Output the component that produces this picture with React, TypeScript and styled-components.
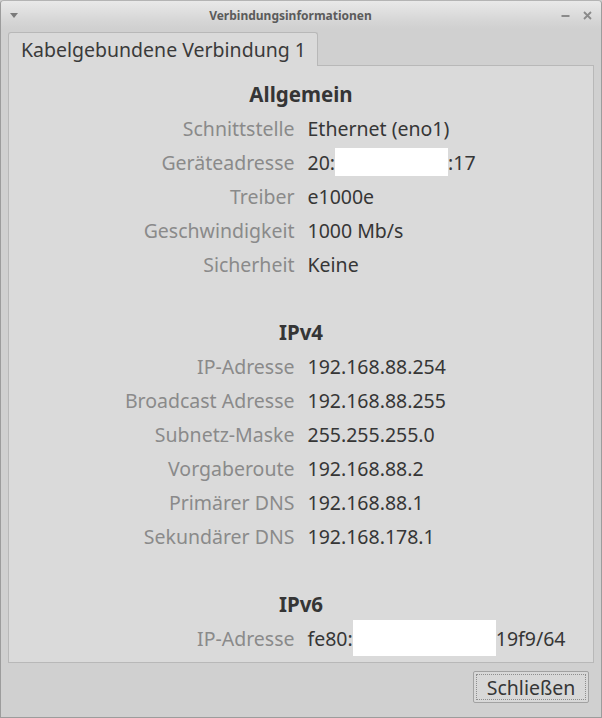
import React from 'react';
import styled, { createGlobalStyle } from 'styled-components';

const GlobalStyle = createGlobalStyle`
    html, body {
        margin: 0;
        padding: 0;
        background: #d0d0d0;
    }
    body {
        font-family: 'Noto Sans', 'DejaVu Sans', sans-serif;
    }
`;

const StyledWindow = styled.div`
    width: 602px;
    height: 718px;
    box-sizing: border-box;
    display: flex;
    flex-direction: column;
    background: #d0d0d0;
    border: 1px solid #9c9c9c;
    border-top-color: #b4b4b4;
    border-radius: 4px 4px 0 0;
    overflow: hidden;
`;

const StyledTitleBar = styled.div`
    height: 28px;
    flex-shrink: 0;
    display: flex;
    align-items: center;
    padding: 0 9px 0 9px;
    background: linear-gradient(#e9e9e9, #d6d6d6 70%, #d0d0d0);
`;

const StyledTitle = styled.div`
    flex: 1;
    text-align: center;
    font-size: 12px;
    font-weight: 700;
    color: #5b5b5b;
    padding-left: 2px;
`;

const StyledMenuArrow = styled.div`
    width: 0;
    height: 0;
    border-left: 4px solid transparent;
    border-right: 4px solid transparent;
    border-top: 5px solid #7a7a7a;
`;

const StyledControls = styled.div`
    display: flex;
    align-items: center;
    gap: 13px;
`;

const StyledBody = styled.div`
    flex: 1;
    display: flex;
    flex-direction: column;
    padding: 3px 7px 0 7px;
`;

const StyledTab = styled.div`
    align-self: flex-start;
    width: 310px;
    height: 34px;
    box-sizing: border-box;
    margin-bottom: -1px;
    position: relative;
    z-index: 1;
    padding-left: 12px;
    display: flex;
    align-items: center;
    font-size: 19.5px;
    color: #3a3a3a;
    background: #dadada;
    border: 1px solid #b8b8b8;
    border-bottom: none;
    border-radius: 3px 3px 0 0;
`;

const StyledPanel = styled.div`
    height: 598px;
    box-sizing: border-box;
    background: #dadada;
    border: 1px solid #b8b8b8;
    padding-top: 11px;
`;

const StyledGrid = styled.div`
    display: grid;
    grid-template-columns: 1fr 1fr;
    column-gap: 13px;
    grid-auto-rows: 34px;
    align-items: center;
    font-size: 19.5px;
`;

const StyledHeading = styled.div`
    grid-column: 1 / span 2;
    text-align: center;
    font-size: 20.5px;
    font-weight: 700;
    color: #353535;
`;

const StyledSpacer = styled.div`
    grid-column: 1 / span 2;
`;

const StyledLabel = styled.div`
    text-align: right;
    color: #8a8a8a;
    white-space: nowrap;
`;

const StyledValue = styled.div`
    color: #363636;
    white-space: nowrap;
    display: flex;
    align-items: center;
`;

const StyledRedacted = styled.span<{ $w: number; $h: number }>`
    display: inline-block;
    width: ${(p) => p.$w}px;
    height: ${(p) => p.$h}px;
    background: #ffffff;
`;

const StyledFooter = styled.div`
    flex: 1;
    display: flex;
    justify-content: flex-end;
    align-items: flex-start;
    padding: 8px 5px 0 0;
`;

const StyledButton = styled.button`
    width: 116px;
    height: 32px;
    box-sizing: border-box;
    padding: 2px;
    font-family: 'Noto Sans', 'DejaVu Sans', sans-serif;
    font-size: 19.5px;
    color: #363636;
    background: #d8d8d8;
    border: 1px solid #a2a2a2;
    border-radius: 2px;
    cursor: pointer;
`;

const StyledButtonInner = styled.span`
    display: flex;
    height: 100%;
    box-sizing: border-box;
    align-items: center;
    justify-content: center;
    border: 1px dotted #8e8e8e;
`;

type Row = { label: string; value: React.ReactNode };

const general: Row[] = [
    { label: 'Schnittstelle', value: 'Ethernet (eno1)' },
    {
        label: 'Geräteadresse',
        value: (
            <>
                20:<StyledRedacted $w={113} $h={28} />:17
            </>
        ),
    },
    { label: 'Treiber', value: 'e1000e' },
    { label: 'Geschwindigkeit', value: '1000 Mb/s' },
    { label: 'Sicherheit', value: 'Keine' },
];

const ipv4: Row[] = [
    { label: 'IP-Adresse', value: '192.168.88.254' },
    { label: 'Broadcast Adresse', value: '192.168.88.255' },
    { label: 'Subnetz-Maske', value: '255.255.255.0' },
    { label: 'Vorgaberoute', value: '192.168.88.2' },
    { label: 'Primärer DNS', value: '192.168.88.1' },
    { label: 'Sekundärer DNS', value: '192.168.178.1' },
];

const ipv6: Row[] = [
    {
        label: 'IP-Adresse',
        value: (
            <>
                fe80:<StyledRedacted $w={143} $h={36} />19f9/64
            </>
        ),
    },
];

const renderRows = (rows: Row[]) =>
    rows.map((el) => (
        <React.Fragment key={el.label}>
            <StyledLabel>{el.label}</StyledLabel>
            <StyledValue>{el.value}</StyledValue>
        </React.Fragment>
    ));

const App: React.FC = () => {
    return (
        <StyledWindow>
            <GlobalStyle />
            <StyledTitleBar>
                <StyledMenuArrow />
                <StyledTitle>Verbindungsinformationen</StyledTitle>
                <StyledControls>
                    <svg width="9" height="9" viewBox="0 0 9 9">
                        <rect x="0.5" y="4" width="8" height="2" fill="#8a8a8a" />
                    </svg>
                    <svg width="9" height="9" viewBox="0 0 9 9">
                        <path d="M1 1 L8 8 M8 1 L1 8" stroke="#8a8a8a" strokeWidth="1.8" />
                    </svg>
                </StyledControls>
            </StyledTitleBar>
            <StyledBody>
                <StyledTab>Kabelgebundene Verbindung 1</StyledTab>
                <StyledPanel>
                    <StyledGrid>
                        <StyledHeading>Allgemein</StyledHeading>
                        {renderRows(general)}
                        <StyledSpacer />
                        <StyledHeading>IPv4</StyledHeading>
                        {renderRows(ipv4)}
                        <StyledSpacer />
                        <StyledHeading>IPv6</StyledHeading>
                        {renderRows(ipv6)}
                    </StyledGrid>
                </StyledPanel>
                <StyledFooter>
                    <StyledButton>
                        <StyledButtonInner>Schließen</StyledButtonInner>
                    </StyledButton>
                </StyledFooter>
            </StyledBody>
        </StyledWindow>
    );
};

export default App;
